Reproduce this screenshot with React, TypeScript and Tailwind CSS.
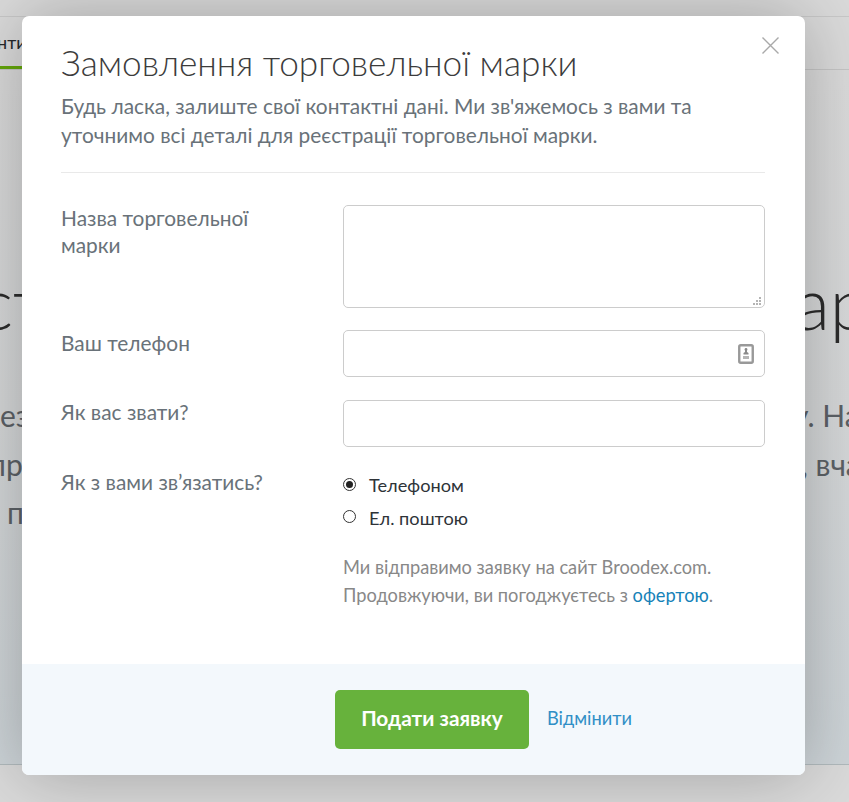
import { ReactNode } from 'react';

interface FieldProps {
  label: ReactNode;
  className?: string;
  children: ReactNode;
}

function Field({ label, className = '', children }: FieldProps) {
  return (
    <div className={`flex items-start ${className}`}>
      <div className="-mt-px w-[282px] shrink-0 text-[20.88px] leading-[27px] text-[#697279]">{label}</div>
      <div className="w-[422px]">{children}</div>
    </div>
  );
}

function ContactIcon() {
  return (
    <svg width="16" height="20" viewBox="0 0 16 20" fill="none">
      <rect x="1.25" y="1.25" width="13.5" height="17.5" rx="1.5" stroke="#999" strokeWidth="2.4" />
      <circle cx="8" cy="5.5" r="1.4" fill="#8a8a8a" />
      <path d="M7 6h2v2l1.5 1v1.5h-5V9L7 8z" fill="#8a8a8a" />
      <rect x="5" y="12" width="6" height="3" fill="#b5b5b5" />
    </svg>
  );
}

function Page() {
  return (
    <div className="flex h-[802px] flex-col bg-[#dadada]">
      <div className="h-[17px] shrink-0 border-b border-[#c8c8c8]" />
      <nav className="h-[53px] shrink-0 border-b border-[#c5c5c5]">
        <div className="h-[52px] w-[60px] border-b-[3px] border-[#64a70b]">
          <span className="-ml-[3px] block pt-[14px] text-[18px] leading-[22px] text-[#26292c]">нти</span>
        </div>
      </nav>
      <section className="h-[695px] shrink-0 border-b border-[#b0b9bc] bg-linear-to-b from-[#dadada] via-[#d5d7d8] to-[#ccd3d7] pt-[187px]">
        <div className="flex h-[90px] justify-between text-[72px] leading-[90px] font-light text-[#2c2c2c]">
          <span className="-ml-[21px]">ст</span>
          <span className="w-[54px] whitespace-nowrap">ар</span>
        </div>
        <div className="pt-[44px] text-[30px] leading-[48.5px] text-[#5c6166]">
          <div className="flex justify-between">
            <span>ез</span>
            <span className="w-[56px] whitespace-nowrap">у. На</span>
          </div>
          <div className="flex justify-between">
            <span className="-ml-[11px]">пр</span>
            <span className="w-[48px] whitespace-nowrap">, вча</span>
          </div>
          <div className="pl-[7px]">п</div>
        </div>
      </section>
    </div>
  );
}

export default function App() {
  return (
    <div className="relative h-[802px] w-[849px] overflow-hidden font-['Lato','Noto_Sans',sans-serif]">
      <Page />

      <div className="absolute top-[16px] left-[22px] flex h-[759px] w-[783px] flex-col overflow-hidden rounded-[7px] bg-white shadow-[0_0_70px_rgba(0,0,0,0.26)]">
        <button className="absolute top-[20.5px] right-[26px]" aria-label="Закрити">
          <svg width="17" height="17" viewBox="0 0 17 17" stroke="#a9a9a9" strokeWidth="1.4">
            <path d="M.5.5l16 16M16.5.5l-16 16" />
          </svg>
        </button>

        <div className="h-[648px] px-[39px] pt-[25px]">
          <h1 className="-mt-px text-[35.2px] leading-[44px] font-light whitespace-nowrap text-[#3c3c3c]">
            Замовлення торговельної марки
          </h1>
          <p className="mt-[7px] text-[20.88px] leading-[29px] whitespace-nowrap text-[#697279]">
            Будь ласка, залиште свої контактні дані. Ми зв'яжемось з вами та
            <br />
            уточнимо всі деталі для реєстрації торговельної марки.
          </p>
          <hr className="mt-[23px] w-[704px] border-[#e9e9e9]" />

          <Field className="mt-[32px] h-[125px]" label={<>Назва торговельної<br />марки</>}>
            <div className="flex h-[103px] items-end justify-end rounded-[5px] border border-[#ccc] px-[3px] pb-[2px]">
              <svg width="8" height="8" viewBox="0 0 8 8" fill="#b4b4b4">
                <path d="M6 0h2v2H6zM3 3h2v2H3zM6 3h2v2H6zM0 6h2v2H0zM3 6h2v2H3zM6 6h2v2H6z" />
              </svg>
            </div>
          </Field>
          <Field className="h-[70px]" label="Ваш телефон">
            <div className="flex h-[47px] items-center justify-end rounded-[5px] border border-[#ccc] pr-[10px]">
              <ContactIcon />
            </div>
          </Field>
          <Field className="h-[70px]" label={<div className="-mt-px">Як вас звати?</div>}>
            <div className="h-[47px] rounded-[5px] border border-[#ccc]" />
          </Field>
          <Field label={<div className="-mt-px">Як з вами зв’язатись?</div>}>
            <div className="-mt-px text-[18.2px] leading-[33px] text-[#2e3338]">
              <label className="flex">
                <span className="mt-[9px] mr-[13px] flex size-[13px] items-center justify-center rounded-full border border-[#333]">
                  <span className="size-[7px] rounded-full bg-[#222]" />
                </span>
                Телефоном
              </label>
              <label className="flex">
                <span className="mt-[8px] mr-[13px] size-[13px] rounded-full border border-[#333]" />
                Ел. поштою
              </label>
            </div>
            <p className="mt-[18px] text-[18.24px] leading-[28px] whitespace-nowrap text-[#888]">
              Ми відправимо заявку на сайт Broodex.com.
              <br />
              Продовжуючи, ви погоджуєтесь з <a className="text-[#1682b8]">офертою</a>.
            </p>
          </Field>
        </div>

        <div className="flex flex-1 items-center bg-[#f3f8fc] pl-[313px]">
          <button className="h-[59px] w-[194px] rounded-[5px] bg-[#67b23c] pb-[3px] text-[20.85px] font-bold text-white">
            Подати заявку
          </button>
          <a className="ml-[18px] pb-px text-[18.24px] text-[#308fc6]">Відмінити</a>
        </div>
      </div>
    </div>
  );
}
